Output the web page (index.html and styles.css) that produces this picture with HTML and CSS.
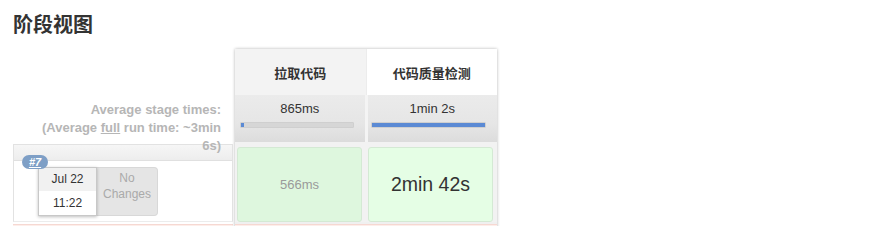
FILE: index.html
```html
<!DOCTYPE html>
<html>
<head>
<meta charset="utf-8">
<link rel="stylesheet" href="styles.css">
</head>
<body>
<h2 class="title">阶段视图</h2>
<div class="stage-view">
  <div class="left-col">
    <div class="head-spacer"></div>
    <div class="avg-label">
      <div class="line">Average stage times:</div>
      <div class="line">(Average <u>full</u> run time: ~3min</div>
      <div class="line">6s)</div>
    </div>
    <div class="build-cell">
      <div class="build-band"></div>
      <span class="badge">#7</span>
      <div class="build-info">
        <div class="date-box">
          <div class="date">Jul 22</div>
          <div class="time">11:22</div>
        </div>
        <div class="changes">No<br>Changes</div>
      </div>
    </div>
    <div class="next-row"></div>
  </div>
  <div class="stages">
    <div class="row head-row">
      <div class="head-cell hovered">拉取代码</div>
      <div class="head-cell">代码质量检测</div>
    </div>
    <div class="row avg-row">
      <div class="avg-cell">
        <div class="avg-time">865ms</div>
        <div class="bar"><div class="fill" style="width:3px"></div></div>
      </div>
      <div class="avg-cell">
        <div class="avg-time">1min 2s</div>
        <div class="bar"><div class="fill" style="width:100%"></div></div>
      </div>
    </div>
    <div class="row build-row">
      <div class="stage-cell dim"><span class="small">566ms</span></div>
      <div class="stage-cell"><span class="big">2min 42s</span></div>
    </div>
    <div class="next-row"></div>
  </div>
</div>
</body>
</html>
```
FILE: styles.css
```css
html, body {
  margin: 0;
  padding: 0;
  background: #fff;
  font-family: "Liberation Sans", Arial, "Noto Sans CJK SC", sans-serif;
  color: #333;
  overflow: hidden;
}
body {
  height: 226px;
}
.title {
  margin: 10px 0 12px 13px;
  font-family: "Noto Sans CJK SC", sans-serif;
  font-size: 20px;
  line-height: 27px;
  font-weight: bold;
  color: #333;
}
.stage-view {
  display: flex;
  margin-left: 13px;
}
.left-col {
  width: 222px;
  display: flex;
  flex-direction: column;
}
.head-spacer {
  height: 46px;
}
.avg-label {
  height: 47px;
  box-sizing: border-box;
  padding: 6px 14px 0 0;
  text-align: right;
  font-size: 13px;
  font-weight: bold;
  line-height: 18px;
  color: #b6b6b6;
  position: relative;
  z-index: 2;
}
.avg-label .line {
  white-space: nowrap;
}
.avg-label u {
  text-decoration: underline;
}
.build-cell {
  position: relative;
  margin-top: 2px;
  margin-right: 2px;
  height: 78px;
  box-sizing: border-box;
  border: 1px solid #e2e2e2;
  border-bottom-color: #ececec;
  background: #fff;
}
.build-band {
  height: 15px;
  background: linear-gradient(#f6f6f6, #ededed);
  border-bottom: 1px solid #e0e0e0;
}
.badge {
  position: absolute;
  left: 8px;
  top: 10px;
  width: 26px;
  height: 14px;
  border-radius: 7px;
  background: #7e9fc6;
  color: #fff;
  font-size: 11px;
  line-height: 14px;
  font-weight: bold;
  font-style: italic;
  text-decoration: underline;
  text-align: center;
  z-index: 3;
}
.build-info {
  display: flex;
  padding: 6px 0 0 24px;
}
.date-box {
  width: 59px;
  height: 49px;
  box-sizing: border-box;
  border: 1px solid #c8c8c8;
  box-shadow: 0 1px 3px rgba(0,0,0,0.25);
  background: #fff;
  font-size: 12px;
  text-align: center;
  color: #333;
  position: relative;
  z-index: 2;
}
.date {
  height: 23px;
  line-height: 22px;
  background: #f1f1f1;
}
.time {
  height: 24px;
  line-height: 24px;
  background: #fff;
}
.changes {
  width: 61px;
  height: 49px;
  box-sizing: border-box;
  background: #e5e5e5;
  border: 1px solid #d8d8d8;
  border-left: none;
  border-radius: 0 4px 4px 0;
  font-size: 12px;
  line-height: 16px;
  padding-top: 2px;
  text-align: center;
  color: #aaa;
}
.next-row {
  margin-top: 2px;
  height: 4px;
  background: #fdeeea;
  border-top: 1px solid #f6d8d2;
}
.left-col .next-row {
  margin-right: 2px;
}
.stages {
  width: 262px;
  display: flex;
  flex-direction: column;
  box-shadow: 0 0 3px rgba(0,0,0,0.3);
  background: #f0f0f0;
}
.row {
  display: flex;
}
.head-row {
  height: 46px;
}
.head-cell {
  flex: 1;
  display: flex;
  align-items: center;
  justify-content: center;
  font-family: "Noto Sans CJK SC", sans-serif;
  font-size: 13px;
  font-weight: bold;
  color: #333;
  background: #fff;
}
.head-cell.hovered {
  background: #f3f3f3;
  border-right: 1px solid #ececec;
}
.avg-row {
  height: 47px;
}
.avg-cell {
  flex: 1;
  background: linear-gradient(#ebebeb, #e6e6e6 60%, #dcdcdc);
  box-sizing: border-box;
  padding-top: 6px;
}
.avg-cell + .avg-cell {
  border-left: 3px solid #f4f4f4;
}
.avg-time {
  font-size: 13px;
  line-height: 16px;
  text-align: center;
  color: #333;
}
.bar {
  margin: 5px 11px 0 5px;
  height: 4px;
  background: #d6d6d6;
  border: 1px solid #cfcfcf;
  border-radius: 1px;
  overflow: hidden;
}
.avg-cell + .avg-cell .bar {
  margin-left: 3px;
}
.fill {
  height: 100%;
  background: #5b8ad4;
}
.build-row {
  height: 80px;
  padding: 5px 4px 0 2px;
  box-sizing: border-box;
  gap: 6px;
  background: #f2f2f2;
}
.stage-cell {
  flex: 1;
  height: 75px;
  box-sizing: border-box;
  border: 1px solid #d4e9d4;
  border-radius: 3px;
  background: #e5fee5;
  display: flex;
  align-items: center;
  justify-content: center;
}
.stage-cell.dim {
  background: #def7de;
}
.small {
  font-size: 13px;
  color: #9a9a9a;
}
.big {
  font-size: 19.5px;
  color: #333;
}
```
